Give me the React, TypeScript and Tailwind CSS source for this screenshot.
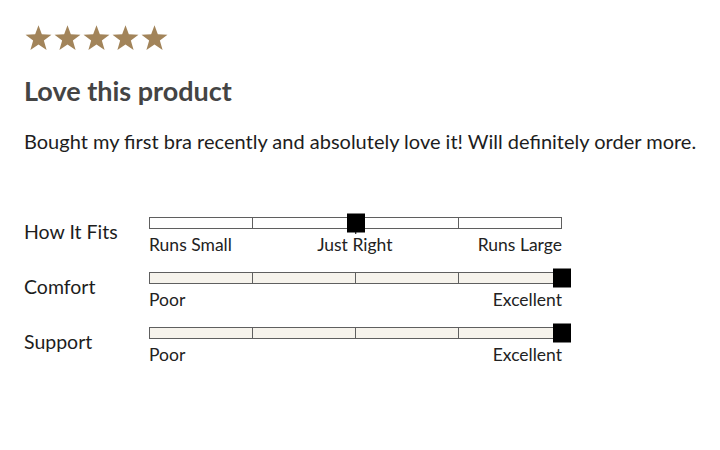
import React from "react";

type Row = {
  label: string;
  value: number; // 0..1
  ticks: string[];
  fill: string;
};

const rows: Row[] = [
  { label: "How It Fits", value: 0.5, ticks: ["Runs Small", "Just Right", "Runs Large"], fill: "bg-white" },
  { label: "Comfort", value: 1, ticks: ["Poor", "Excellent"], fill: "bg-[#f6f3ec]" },
  { label: "Support", value: 1, ticks: ["Poor", "Excellent"], fill: "bg-[#f6f3ec]" },
];

function Star() {
  return (
    <svg width="29" height="25" viewBox="1 0.4 22 21" className="fill-[#a2845a]">
      <path d="M12 0.6l2.8 7.6 8.1 0.3-6.4 5 2.3 7.8L12 16.8l-6.8 4.5 2.3-7.8-6.4-5 8.1-0.3z" />
    </svg>
  );
}

function Scale({ row }: { row: Row }) {
  return (
    <div className="w-[413px]">
      <div className="relative h-[12px]">
        <div className={`flex h-full border-[1.5px] border-[#5f5f5f] ${row.fill}`}>
          {[0, 1, 2, 3].map((i) => (
            <div key={i} className={`flex-1 ${i < 3 ? "border-r-[1.5px] border-[#5f5f5f]" : ""}`} />
          ))}
        </div>
        {row.value === 0.5 && (
          <div className="absolute left-1/2 top-[-3px] h-[20px] w-[1.5px] -translate-x-1/2 bg-black" />
        )}
        <div
          className="absolute top-1/2 h-[19px] w-[18px] -translate-x-1/2 -translate-y-1/2 bg-black"
          style={{ left: `${row.value * 100}%` }}
        />
      </div>
      <div className="mt-[6px] flex h-[20px] justify-between text-[17.5px] leading-[20px] text-[#222]">
        {row.ticks.map((t) => (
          <span key={t}>{t}</span>
        ))}
      </div>
    </div>
  );
}

export default function App() {
  return (
    <div className="h-[450px] w-[720px] bg-white pl-[24px] pt-[25px] font-['Lato','Noto_Sans',sans-serif] text-[#1d1d1d]">
      <div className="flex">
        {[0, 1, 2, 3, 4].map((i) => (
          <Star key={i} />
        ))}
      </div>
      <h2 className="mt-[25px] text-[27px] font-bold leading-[32px] text-[#444]">Love this product</h2>
      <p className="mt-[21px] text-[20px] leading-[26px]">
        Bought my first bra recently and absolutely love it! Will definitely order more.
      </p>
      <div className="mt-[63px] flex flex-col gap-[17px]">
        {rows.map((row) => (
          <div key={row.label} className="flex">
            <div className="w-[125px] pt-[4px] text-[19.5px] leading-[22px]">{row.label}</div>
            <Scale row={row} />
          </div>
        ))}
      </div>
    </div>
  );
}
